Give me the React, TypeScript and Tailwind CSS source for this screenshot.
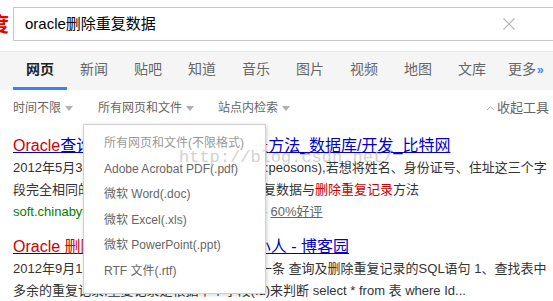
import React from 'react'

const font = { fontFamily: '"Liberation Sans", Arial, "Noto Sans CJK SC", sans-serif' }

const navItems = ['网页', '新闻', '贴吧', '知道', '音乐', '图片', '视频', '地图', '文库']

const fileTypes = [
  'Adobe Acrobat PDF(.pdf)',
  '微软 Word(.doc)',
  '微软 Excel(.xls)',
  '微软 PowerPoint(.ppt)',
  'RTF 文件(.rtf)',
]

function Caret() {
  return <span className="ml-[4px] inline-block h-0 w-0 border-x-[4px] border-t-[5px] border-x-transparent border-t-[#b0b0b0] align-middle" />
}

// the part of a line that sits under the open dropdown
function Clip({ w, children }: { w: string; children: React.ReactNode }) {
  return <span className={`inline-block overflow-hidden whitespace-nowrap align-bottom ${w}`}>{children}</span>
}

export default function App() {
  return (
    <div className="relative h-[301px] w-[553px] overflow-hidden bg-white text-[13px] text-[#333]" style={font}>
      {/* search bar */}
      <div className="flex h-[51px] items-start">
        <span className="mt-[13px] -ml-[11px] w-[24px] shrink-0 text-[20px] font-bold leading-[24px] text-[#e10601]">度</span>
        <div className="mt-[7px] flex h-[34px] w-[560px] shrink-0 items-center justify-between border border-[#c4c7ce] pl-[11px] pr-[57px]">
          <span className="text-[15px] text-[#000]">oracle删除重复数据</span>
          <svg width="12" height="12" viewBox="0 0 12 12">
            <path d="M0.5 0.5L11.5 11.5M11.5 0.5L0.5 11.5" stroke="#b4b4b4" strokeWidth="1.1" />
          </svg>
        </div>
      </div>

      {/* tabs */}
      <div className="flex h-[39px] items-stretch border-t border-[#ebebeb] bg-[#f5f5f6] pl-[13px] text-[14px] text-[#666]">
        {navItems.map((n, i) => (
          <div
            key={n}
            className={`flex w-[54px] shrink-0 items-center justify-center border-b-[3px] ${
              i === 0 ? 'border-[#3385ff] font-bold text-[#222]' : 'border-transparent'
            }`}
          >
            {n}
          </div>
        ))}
        <div className="ml-[9px] flex items-center pb-[3px]">
          更多<span className="ml-[1px] text-[12px] font-bold text-[#3385ff]">»</span>
        </div>
      </div>

      {/* tools */}
      <div className="flex h-[36px] items-center pl-[13px] text-[12px] text-[#666]">
        <span>时间不限<Caret /></span>
        <span className="ml-[25px]">所有网页和文件<Caret /></span>
        <span className="ml-[24px]">站点内检索<Caret /></span>
        <span className="ml-auto mr-[4px] flex items-center text-[13px]">
          <svg width="9" height="6" viewBox="0 0 9 6" className="mr-[2px]">
            <path d="M1 5L4.5 1.5L8 5" fill="none" stroke="#b0b0b0" strokeWidth="1" />
          </svg>
          收起工具
        </span>
      </div>

      {/* results */}
      <div className="pl-[13px] pt-[9px]">
        <div className="whitespace-nowrap text-[16px] leading-[22px] text-[#00c] underline">
          <span className="text-[#c00]">Oracle</span>查询重复数据与<span className="text-[#c00]">删除重复记录</span>方法_数据库/开发_比特网
        </div>
        <div className="whitespace-nowrap leading-[22px]">
          <Clip w="w-[252px]">2012年5月31日 - 假设有一张人员信息表cs(pepole</Clip>:peosons),若想将姓名、身份证号、住址这三个字
        </div>
        <div className="whitespace-nowrap leading-[22px]">
          <Clip w="w-[250px]">段完全相同的记录查询出来,使用查询重</Clip>复数据与<span className="text-[#c00]">删除重复记录</span>方法
        </div>
        <div className="whitespace-nowrap leading-[22px] text-[#008000]">
          <Clip w="w-[246px]">soft.chinabyte.com/database/281/12335781.shtml</Clip> - <span className="text-[#666] underline">60%好评</span>
        </div>
        <div className="mt-[13px] whitespace-nowrap text-[16px] leading-[22px] text-[#00c] underline">
          <span className="text-[#c00]">Oracle 删除重复数据</span>的一种方法 - 小人 - 博客园
        </div>
        <div className="whitespace-nowrap leading-[22px]">
          <Clip w="w-[246px]">2012年9月12日 - 一、查询及删除重复记录的方法</Clip>一条 查询及删除重复记录的SQL语句 1、查找表中
        </div>
        <div className="whitespace-nowrap leading-[22px]">多余的重复记录,重复记录是根据单个字段(Id)来判断 select * from 表 where Id...</div>
      </div>

      {/* dropdown */}
      <div className="absolute left-[83px] top-[124px] w-[183px] border border-[#d0d0d0] bg-white pb-[8px] pl-[20px] pt-[6px] text-[12px] text-[#666] shadow-[1px_1px_4px_rgba(0,0,0,0.18)]">
        <div className="leading-[25.6px] text-[#999]">所有网页和文件(不限格式)</div>
        {fileTypes.map((t) => (
          <div key={t} className="leading-[25.6px]">{t}</div>
        ))}
      </div>

      {/* watermark */}
      <div
        className="pointer-events-none absolute left-[179px] top-[146px] text-[17px] leading-[24px] text-[#c8c8c8] opacity-80"
        style={{ fontFamily: '"Liberation Mono", monospace' }}
      >
        http://blog.csdn.net/
      </div>
    </div>
  )
}
